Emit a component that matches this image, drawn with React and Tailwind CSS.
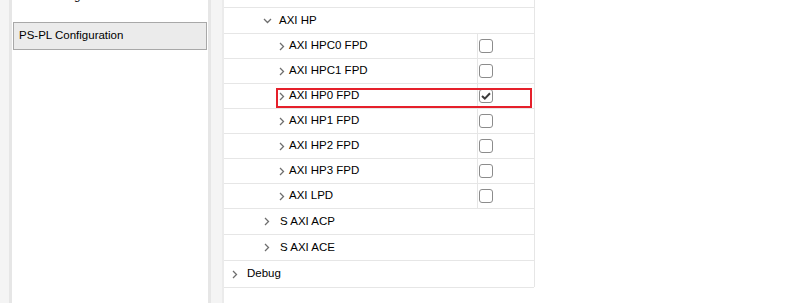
import React from 'react';

function ChevronRight() {
  return (
    <svg width="6" height="9" viewBox="0 0 6 9" className="shrink-0">
      <path d="M1 1 L4.5 4.5 L1 8" fill="none" stroke="#6e6e6e" strokeWidth="1.3" />
    </svg>
  );
}

function ChevronDown() {
  return (
    <svg width="9" height="6" viewBox="0 0 9 6" className="shrink-0">
      <path d="M1 1 L4.5 4.5 L8 1" fill="none" stroke="#6e6e6e" strokeWidth="1.3" />
    </svg>
  );
}

function Checkbox({ checked }) {
  return (
    <div className="w-[14px] h-[14px] rounded-[3px] border-[1.5px] border-[#8c8c8c] bg-white flex items-center justify-center">
      {checked && (
        <svg width="10" height="8" viewBox="0 0 10 8">
          <path d="M1 4 L3.8 6.6 L9 1.2" fill="none" stroke="#3c3c3c" strokeWidth="2" />
        </svg>
      )}
    </div>
  );
}

const ports = [
  { name: 'AXI HPC0 FPD', checked: false },
  { name: 'AXI HPC1 FPD', checked: false },
  { name: 'AXI HP0 FPD', checked: true, marked: true },
  { name: 'AXI HP1 FPD', checked: false },
  { name: 'AXI HP2 FPD', checked: false },
  { name: 'AXI HP3 FPD', checked: false },
  { name: 'AXI LPD', checked: false },
];

export default function App() {
  return (
    <div className="flex w-[794px] h-[303px] overflow-hidden bg-white text-[11.5px] text-black font-['Liberation_Sans',Arial,sans-serif]">
      {/* left edge */}
      <div className="w-[9px] bg-[#f4f4f4]" />
      <div className="w-[3px] bg-[#e6e6e6]" />

      {/* page navigator */}
      <nav className="w-[196px] px-[1px] flex flex-col">
        <div className="h-[28px] -mt-[17px] flex items-center pl-[5px] border border-transparent">DDR Configuration</div>
        <div className="h-[28px] mt-[11px] flex items-center pl-[5px] bg-[#ebebeb] border border-[#a8a8a8]">PS-PL Configuration</div>
      </nav>

      {/* splitter */}
      <div className="w-[3px] bg-[#e6e6e6]" />
      <div className="w-[11px] bg-[#f4f4f4]" />
      <div className="w-[2px] bg-[#ebebeb]" />

      {/* configuration tree */}
      <main className="w-[311px] h-[287px] border-r border-[#e6e6e6] flex flex-col">
        <div className="h-[8px] shrink-0 border-b border-[#e6e6e6]" />
        <div className="h-[26px] shrink-0 border-b border-[#e6e6e6] flex items-center">
          <div className="w-[39px]" />
          <ChevronDown />
          <span className="ml-[7px]">AXI HP</span>
        </div>
        {ports.map((p) => (
          <div key={p.name} className="relative h-[25px] shrink-0 border-b border-[#e6e6e6] flex">
            <div className="w-[253px] flex items-center">
              <div className="w-[55px]" />
              <ChevronRight />
              <span className="ml-[4px]">{p.name}</span>
            </div>
            <div className="border-l border-[#e6e6e6] flex items-center pl-[1px]">
              <Checkbox checked={p.checked} />
            </div>
            {p.marked && (
              <div className="absolute left-[52px] top-[4px] w-[256px] h-[20px] border-2 border-[#e5202b]" />
            )}
          </div>
        ))}
        <div className="h-[26px] shrink-0 border-b border-[#e6e6e6] flex items-center">
          <div className="w-[40px]" />
          <ChevronRight />
          <span className="ml-[10px]">S AXI ACP</span>
        </div>
        <div className="h-[26px] shrink-0 border-b border-[#e6e6e6] flex items-center">
          <div className="w-[40px]" />
          <ChevronRight />
          <span className="ml-[10px]">S AXI ACE</span>
        </div>
        <div className="h-[27px] shrink-0 border-b border-[#e6e6e6] flex items-center">
          <div className="w-[8px]" />
          <ChevronRight />
          <span className="ml-[9px]">Debug</span>
        </div>
      </main>
    </div>
  );
}
